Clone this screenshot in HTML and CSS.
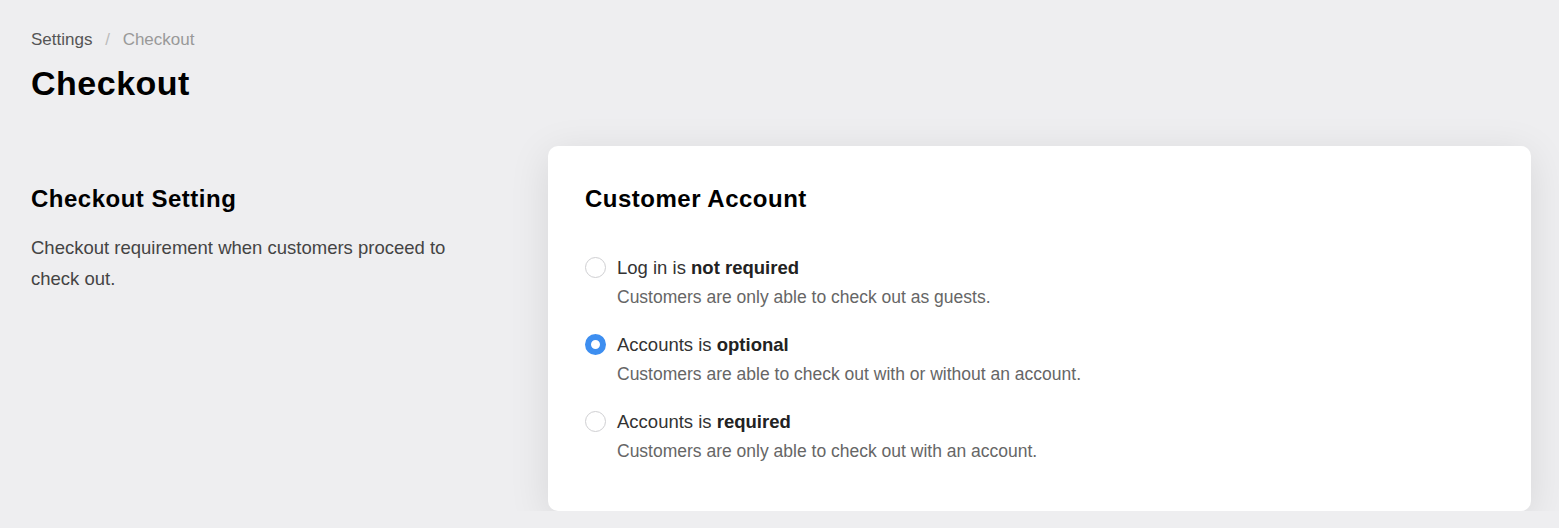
FILE: index.html
```html
<!DOCTYPE html>
<html lang="en">
<head>
<meta charset="utf-8">
<title>Checkout</title>
<link rel="stylesheet" href="styles.css">
</head>
<body>
<div class="page">
  <nav class="breadcrumb">
    <span class="crumb-link">Settings</span>
    <span class="crumb-sep">/</span>
    <span class="crumb-current">Checkout</span>
  </nav>
  <h1 class="page-title">Checkout</h1>
  <section class="layout">
    <div class="intro">
      <h2 class="intro-title">Checkout Setting</h2>
      <p class="intro-text">Checkout requirement when customers proceed to check out.</p>
    </div>
    <div class="card">
      <h2 class="card-title">Customer Account</h2>
      <div class="options">
        <label class="option">
          <span class="radio"></span>
          <span class="option-body">
            <span class="option-label">Log in is <b>not required</b></span>
            <span class="option-desc">Customers are only able to check out as guests.</span>
          </span>
        </label>
        <label class="option">
          <span class="radio checked"></span>
          <span class="option-body">
            <span class="option-label">Accounts is <b>optional</b></span>
            <span class="option-desc">Customers are able to check out with or without an account.</span>
          </span>
        </label>
        <label class="option">
          <span class="radio"></span>
          <span class="option-body">
            <span class="option-label">Accounts is <b>required</b></span>
            <span class="option-desc">Customers are only able to check out with an account.</span>
          </span>
        </label>
      </div>
    </div>
  </section>
</div>
</body>
</html>
```

FILE: styles.css
```css
* { box-sizing: border-box; }
html, body {
  margin: 0;
  background: #eeeef0;
  font-family: "Liberation Sans", Arial, sans-serif;
  color: #111;
}
.page {
  padding: 30px 28px 0 31px;
}
.breadcrumb {
  font-size: 17px;
  line-height: 20px;
  height: 20px;
}
.crumb-link { color: #555; }
.crumb-sep { color: #bbb; margin: 0 8px; }
.crumb-current { color: #999; }
.page-title {
  margin: 13px 0 0;
  font-size: 34px;
  letter-spacing: 0.5px;
  line-height: 40px;
  font-weight: 700;
  color: #000;
}
.layout {
  margin-top: 43px;
  display: grid;
  grid-template-columns: 460px 1fr;
  column-gap: 57px;
  align-items: start;
}
.intro { padding-top: 40px; }
.intro-title {
  margin: 0;
  font-size: 24px;
  letter-spacing: 0.5px;
  line-height: 26px;
  font-weight: 700;
  color: #000;
}
.intro-text {
  margin: 20px 0 0;
  font-size: 18.5px;
  line-height: 31px;
  color: #444;
}
.card {
  background: #fff;
  border-radius: 10px;
  padding: 40px 37px 49px;
  box-shadow: 0 8px 40px rgba(0, 0, 0, 0.1);
}
.card-title {
  margin: 0;
  font-size: 24px;
  letter-spacing: 0.5px;
  line-height: 26px;
  font-weight: 700;
  color: #000;
}
.options {
  margin-top: 44px;
  display: flex;
  flex-direction: column;
  gap: 25px;
}
.option {
  display: flex;
  align-items: flex-start;
  gap: 11px;
}
.radio {
  flex: none;
  width: 21px;
  height: 21px;
  margin-top: 1px;
  border-radius: 50%;
  border: 1px solid #cfcfd2;
  background: #fff;
}
.radio.checked {
  border: 6px solid #3d8ef0;
}
.option-body {
  display: flex;
  flex-direction: column;
  gap: 6px;
}
.option-label {
  font-size: 18.5px;
  line-height: 24px;
  color: #333;
}
.option-label b { color: #222; }
.option-desc {
  font-size: 17.5px;
  line-height: 22px;
  color: #666;
}
```
